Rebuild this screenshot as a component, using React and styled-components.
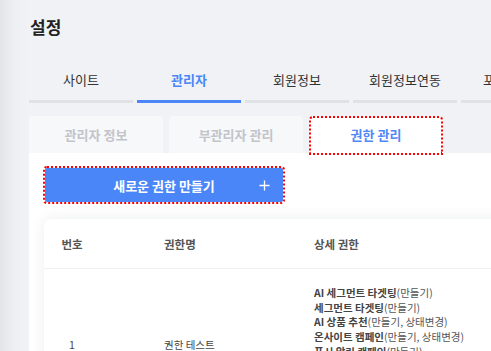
import React, { useState } from 'react';
import styled, { createGlobalStyle } from 'styled-components';

const GlobalStyle = createGlobalStyle`
  html, body {
    margin: 0;
    padding: 0;
    overflow: hidden;
  }
  body {
    font-family: "Noto Sans CJK KR", "Noto Sans", sans-serif;
    background: #f1f2f6;
  }
`;

const Page = styled.div`
  width: 491px;
  height: 351px;
  overflow: hidden;
  background: linear-gradient(to right, #e3e4e9 0, #eeeff3 14px, #f1f2f6 28px);
  padding: 14px 0 0 29px;
  box-sizing: border-box;
`;

const Title = styled.h1`
  margin: 0 0 0 1px;
  font-size: 17px;
  line-height: 26px;
  font-weight: 700;
  color: #222;
`;

const TopTabs = styled.div`
  display: flex;
  gap: 4px;
  margin-top: 31px;
  width: 600px;
`;

const TopTab = styled.div`
  flex: 0 0 104px;
  text-align: center;
  font-size: 13px;
  line-height: 18px;
  padding-bottom: 11px;
  color: ${p => (p.$active ? '#4a86f7' : '#333')};
  font-weight: ${p => (p.$active ? 700 : 400)};
  border-bottom: 3px solid ${p => (p.$active ? '#4a86f7' : '#e1e2e6')};
  white-space: nowrap;
  overflow: hidden;
`;

const SubTabs = styled.div`
  display: flex;
  align-items: flex-start;
  gap: 6px;
  margin-top: 13px;
  height: 37px;
`;

const SubTab = styled.div`
  flex: 0 0 134px;
  height: ${p => (p.$active ? '39px' : '37px')};
  box-sizing: border-box;
  padding-bottom: ${p => (p.$active ? '2px' : '0')};
  display: flex;
  align-items: center;
  justify-content: center;
  font-size: 13px;
  font-weight: 700;
  border-radius: 4px 4px 0 0;
  background: ${p => (p.$active ? '#fff' : '#f7f8fa')};
  color: ${p => (p.$active ? '#5088f6' : '#c2c4ca')};
  outline: ${p => (p.$active ? '2px dotted #ff0000' : 'none')};
  outline-offset: -2px;
  position: relative;
  z-index: 1;
  cursor: pointer;
`;

const Panel = styled.div`
  background: #fff;
  padding: 15px 0 0 15px;
  height: 400px;
`;

const CreateButton = styled.button`
  width: 238px;
  height: 34px;
  margin-left: 1px;
  border: none;
  border-radius: 2px;
  background: #4a86f8;
  color: #fff;
  font-family: inherit;
  font-size: 13px;
  font-weight: 700;
  display: flex;
  align-items: center;
  justify-content: center;
  position: relative;
  outline: 2px dotted #ff0000;
  outline-offset: 0;
  cursor: pointer;

  svg {
    position: absolute;
    right: 13px;
    top: 12px;
  }
`;

const Card = styled.div`
  margin-top: 17px;
  width: 520px;
  background: #fff;
  border-radius: 6px;
  box-shadow: 0 0 14px rgba(30, 40, 70, 0.08);
`;

const Row = styled.div`
  display: grid;
  grid-template-columns: 56px 86px 1fr;
  column-gap: 64px;
  align-items: center;
  border-bottom: ${p => (p.$head ? '1px solid #eef0f3' : 'none')};
  min-height: ${p => (p.$head ? '49px' : 'auto')};
  padding: ${p => (p.$head ? '0' : '17px 0')};
  font-size: ${p => (p.$head ? '11.5px' : '10.5px')};
  font-weight: ${p => (p.$head ? 700 : 400)};
  color: ${p => (p.$head ? '#555' : '#444')};
`;

const Cell = styled.div`
  text-align: ${p => (p.$center ? 'center' : 'left')};
  white-space: nowrap;
`;

const Perm = styled.div`
  line-height: 14.7px;
  color: #555;
  white-space: nowrap;

  b {
    font-weight: 700;
    color: #444;
  }
`;

const PlusIcon = () => (
  <svg width="11" height="11" viewBox="0 0 11 11" fill="none">
    <path d="M5.5 0.5v10M0.5 5.5h10" stroke="#fff" strokeWidth="1.3" />
  </svg>
);

const permissions = [
  ['AI 세그먼트 타겟팅', '만들기'],
  ['세그먼트 타겟팅', '만들기'],
  ['AI 상품 추천', '만들기, 상태변경'],
  ['온사이트 캠페인', '만들기, 상태변경'],
  ['푸시 알림 캠페인', '만들기'],
  ['이메일 캠페인', '만들기'],
  ['카카오 알림톡', '만들기'],
  ['리포트', '조회'],
];

const topTabs = ['사이트', '관리자', '회원정보', '회원정보연동', '포인트설정'];
const subTabs = ['관리자 정보', '부관리자 관리', '권한 관리'];

const App = () => {
  const [topTab, setTopTab] = useState(1);
  const [subTab, setSubTab] = useState(2);

  return (
    <Page>
      <GlobalStyle />
      <Title>설정</Title>
      <TopTabs>
        {topTabs.map((t, i) => (
          <TopTab key={t} $active={i === topTab} onClick={() => setTopTab(i)}>
            {t}
          </TopTab>
        ))}
      </TopTabs>
      <SubTabs>
        {subTabs.map((t, i) => (
          <SubTab key={t} $active={i === subTab} onClick={() => setSubTab(i)}>
            {t}
          </SubTab>
        ))}
      </SubTabs>
      <Panel>
        <CreateButton>
          새로운 권한 만들기
          <PlusIcon />
        </CreateButton>
        <Card>
          <Row $head>
            <Cell $center>번호</Cell>
            <Cell>권한명</Cell>
            <Cell>상세 권한</Cell>
          </Row>
          <Row>
            <Cell $center>1</Cell>
            <Cell>권한 테스트</Cell>
            <Cell>
              {permissions.map(([name, acts]) => (
                <Perm key={name}>
                  <b>{name}</b>({acts})
                </Perm>
              ))}
            </Cell>
          </Row>
        </Card>
      </Panel>
    </Page>
  );
};

export default App;
